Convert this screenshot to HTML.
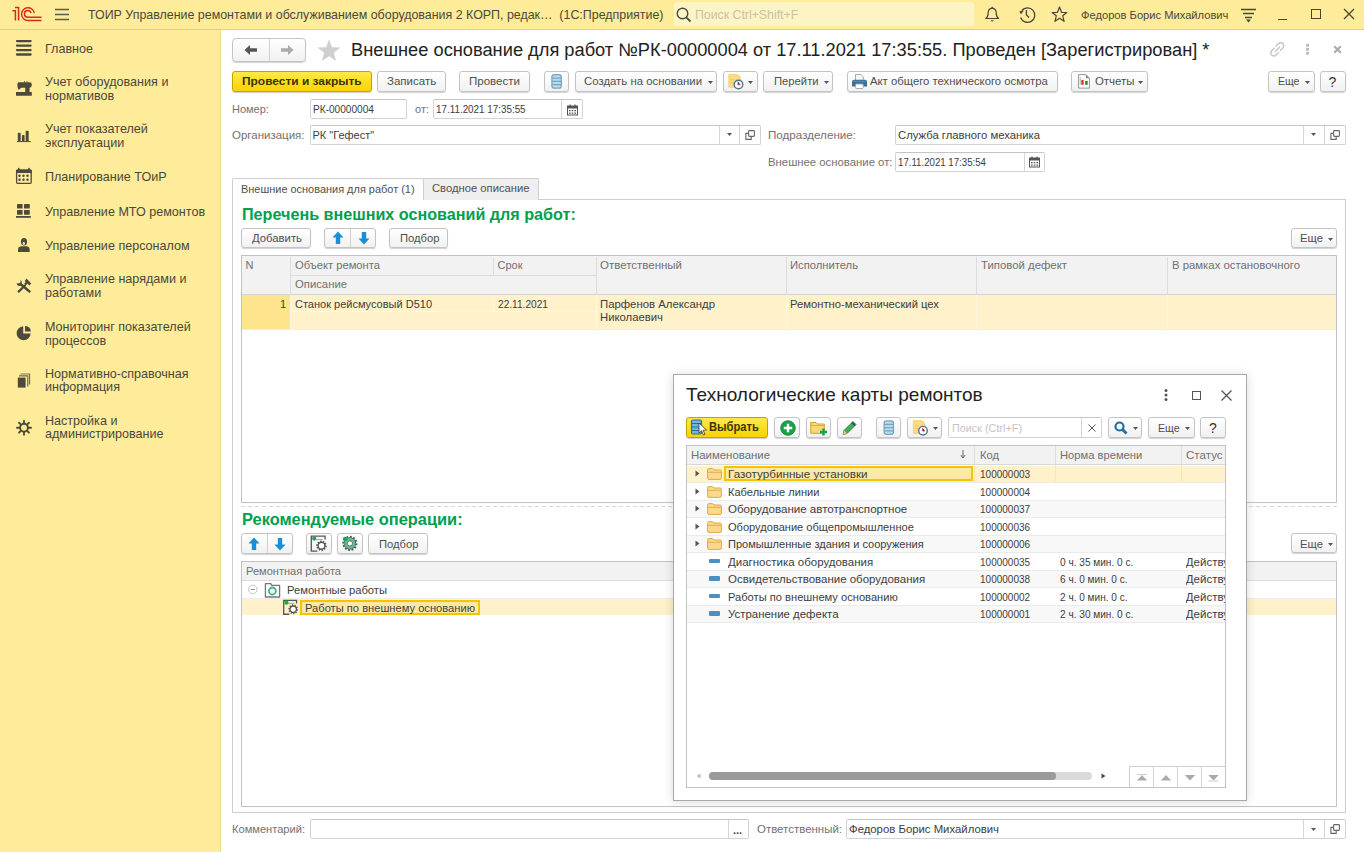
<!DOCTYPE html>
<html><head><meta charset="utf-8"><style>
html,body{margin:0;padding:0;width:1364px;height:852px;overflow:hidden;background:#fff;}
body{position:relative;font-family:"Liberation Sans", sans-serif;}
body>div{position:absolute;}
.tx{white-space:nowrap;font-family:"Liberation Sans", sans-serif;}
</style></head><body>
<div style="left:0px;top:0px;width:1364px;height:29px;background:#FEEC9B;"></div>
<div style="left:0px;top:29px;width:1364px;height:1px;background:#E0CF86;"></div>
<svg style="position:absolute;left:0px;top:0px" width="44" height="28" viewBox="0 0 44 28">
<path d="M12.4 10.8 H15.4 V20.5" stroke="#D52B1B" stroke-width="1.5" fill="none"/>
<path d="M15 7.6 H18.6 V20.5" stroke="#D52B1B" stroke-width="1.5" fill="none"/>
<path d="M34.3 13.1 A6.4 6.4 0 1 0 28 20.5 H41.5" stroke="#D52B1B" stroke-width="1.4" fill="none"/>
<path d="M31 13.1 A3.35 3.35 0 1 0 27.75 17.2 H41.5" stroke="#D52B1B" stroke-width="1.4" fill="none"/>
</svg>
<svg style="position:absolute;left:55px;top:8px" width="15" height="13" viewBox="0 0 15 13"><path d="M0 1.5H14M0 6.5H14M0 11.5H14" stroke="#5b5a4c" stroke-width="1.3"/></svg>
<div class="tx" style="transform:scaleX(0.9553);transform-origin:0 0;left:88px;top:6.70px;font-size:13px;line-height:16px;color:#4a4839;font-weight:400;">ТОИР Управление ремонтами и обслуживанием оборудования 2 КОРП, редак…&nbsp; (1С:Предприятие)</div>
<div style="left:674px;top:2px;width:300px;height:24px;background:#FDF4C6;border-radius:3px;"></div>
<svg style="position:absolute;left:676px;top:7px" width="16" height="16" viewBox="0 0 16 16"><circle cx="6.5" cy="6.5" r="5.3" stroke="#4a4a40" stroke-width="1.4" fill="none"/><path d="M10.3 10.3L14.5 14.5" stroke="#4a4a40" stroke-width="1.8"/></svg>
<div class="tx" style="transform:scaleX(0.9846);transform-origin:0 0;left:695px;top:7.17px;font-size:12.5px;line-height:16px;color:#c9c2a2;font-weight:400;">Поиск Ctrl+Shift+F</div>
<svg style="position:absolute;left:980px;top:4px" width="24" height="20" viewBox="0 0 24 20"><path d="M5.8 14.5 Q8.2 12.8 8.2 8.5 Q8.4 4.8 12.2 4.2 Q16 4.8 16.2 8.5 Q16.2 12.8 18.6 14.5 Z" stroke="#4a4536" stroke-width="1.2" fill="none" stroke-linejoin="round"/><path d="M10.5 16.2 Q12.2 18.6 13.9 16.2Z" fill="#4a4536"/><path d="M12.2 2.8V4.2" stroke="#4a4536" stroke-width="1.3"/></svg>
<svg style="position:absolute;left:1016px;top:4px" width="22" height="20" viewBox="0 0 22 20"><path d="M5.8 6.5 A7.3 7.3 0 1 1 4.6 13.5" stroke="#4a4536" stroke-width="1.3" fill="none"/><path d="M3.2 7.6 L7.8 6.6 L5 10.2Z" fill="#4a4536"/><path d="M10.4 6V11L13.2 13.6" stroke="#4a4536" stroke-width="1.3" fill="none"/></svg>
<svg style="position:absolute;left:1050px;top:4px" width="20" height="20" viewBox="0 0 20 20"><path d="M9.5 3 L11.5 8.3 L16.8 8.5 L12.7 11.8 L14.1 17.3 L9.5 14.2 L4.9 17.3 L6.3 11.8 L2.2 8.5 L7.5 8.3 Z" stroke="#4a4536" stroke-width="1.2" fill="none" stroke-linejoin="round"/></svg>
<div class="tx" style="transform:scaleX(0.9697);transform-origin:0 0;left:1080.6px;top:7.52px;font-size:11.5px;line-height:14px;color:#4a4839;font-weight:400;">Федоров Борис Михайлович</div>
<svg style="position:absolute;left:1241px;top:8px" width="16" height="15" viewBox="0 0 16 15"><path d="M0 1.5H15M2 5.5H13M4 9.5H11" stroke="#4a4536" stroke-width="1.3"/><path d="M5 11.5H10L7.5 14.5Z" fill="#4a4536"/></svg>
<div style="left:1278px;top:19px;width:9px;height:1px;background:#4a4536;"></div>
<div style="left:1311px;top:9px;width:10px;height:10px;border:1.3px solid #4a4536;box-sizing:border-box;"></div>
<svg style="position:absolute;left:1343px;top:8px" width="12" height="12" viewBox="0 0 12 12"><path d="M1 1L11 11M11 1L1 11" stroke="#4a4536" stroke-width="1.3"/></svg>
<div style="left:0px;top:30px;width:220px;height:822px;background:#FEEC9B;"></div>
<div style="left:220px;top:30px;width:1px;height:822px;background:#EADA92;"></div>
<div class="tx" style="left:45.3px;top:40.50px;font-size:13px;line-height:16px;color:#4a4839;font-weight:400;transform:scaleX(0.967);transform-origin:0 0;">Главное</div>
<div class="tx" style="left:45.3px;top:73.80px;font-size:13px;line-height:16px;color:#4a4839;font-weight:400;transform:scaleX(0.967);transform-origin:0 0;">Учет оборудования и</div>
<div class="tx" style="left:45.3px;top:88.30px;font-size:13px;line-height:16px;color:#4a4839;font-weight:400;transform:scaleX(0.967);transform-origin:0 0;">нормативов</div>
<div class="tx" style="left:45.3px;top:121.00px;font-size:13px;line-height:16px;color:#4a4839;font-weight:400;transform:scaleX(0.967);transform-origin:0 0;">Учет показателей</div>
<div class="tx" style="left:45.3px;top:135.30px;font-size:13px;line-height:16px;color:#4a4839;font-weight:400;transform:scaleX(0.967);transform-origin:0 0;">эксплуатации</div>
<div class="tx" style="left:45.3px;top:168.50px;font-size:13px;line-height:16px;color:#4a4839;font-weight:400;transform:scaleX(0.967);transform-origin:0 0;">Планирование ТОиР</div>
<div class="tx" style="left:45.3px;top:203.50px;font-size:13px;line-height:16px;color:#4a4839;font-weight:400;transform:scaleX(0.967);transform-origin:0 0;">Управление МТО ремонтов</div>
<div class="tx" style="left:45.3px;top:237.50px;font-size:13px;line-height:16px;color:#4a4839;font-weight:400;transform:scaleX(0.967);transform-origin:0 0;">Управление персоналом</div>
<div class="tx" style="left:45.3px;top:270.80px;font-size:13px;line-height:16px;color:#4a4839;font-weight:400;transform:scaleX(0.967);transform-origin:0 0;">Управление нарядами и</div>
<div class="tx" style="left:45.3px;top:285.10px;font-size:13px;line-height:16px;color:#4a4839;font-weight:400;transform:scaleX(0.967);transform-origin:0 0;">работами</div>
<div class="tx" style="left:45.3px;top:318.90px;font-size:13px;line-height:16px;color:#4a4839;font-weight:400;transform:scaleX(0.967);transform-origin:0 0;">Мониторинг показателей</div>
<div class="tx" style="left:45.3px;top:332.50px;font-size:13px;line-height:16px;color:#4a4839;font-weight:400;transform:scaleX(0.967);transform-origin:0 0;">процессов</div>
<div class="tx" style="left:45.3px;top:365.70px;font-size:13px;line-height:16px;color:#4a4839;font-weight:400;transform:scaleX(0.967);transform-origin:0 0;">Нормативно-справочная</div>
<div class="tx" style="left:45.3px;top:379.30px;font-size:13px;line-height:16px;color:#4a4839;font-weight:400;transform:scaleX(0.967);transform-origin:0 0;">информация</div>
<div class="tx" style="left:45.3px;top:412.50px;font-size:13px;line-height:16px;color:#4a4839;font-weight:400;transform:scaleX(0.967);transform-origin:0 0;">Настройка и</div>
<div class="tx" style="left:45.3px;top:426.10px;font-size:13px;line-height:16px;color:#4a4839;font-weight:400;transform:scaleX(0.967);transform-origin:0 0;">администрирование</div>
<svg style="position:absolute;left:0px;top:30px" width="40" height="420" viewBox="0 30 40 420">
<path d="M17 41.1H30.6M17 45.6H30.6M17 50.1H30.6M17 54.5H30.6" stroke="#4d4a3c" stroke-width="2.3" stroke-linecap="round"/>
<path d="M18.5 82.2 H29.8 Q31.8 82.2 31.8 84.5 Q31.8 87.5 29.6 87.8 V92 H31.8 V95.7 H16 V92 H25.2 V87.8 H21.5 Q19.8 88.5 18.8 90 Q17.4 88 17.4 85.5 Q17.4 82.2 18.5 82.2Z" fill="#4d4a3c"/>
<path d="M24.5 81V82.5M27 81V82.5" stroke="#4d4a3c" stroke-width="0.8"/>
<rect x="17.8" y="132.8" width="2.9" height="8.6" rx="0.8" fill="#4d4a3c"/>
<rect x="21.9" y="135" width="2.7" height="6.4" rx="0.8" fill="#4d4a3c"/>
<rect x="25.7" y="130.8" width="3" height="10.6" rx="0.8" fill="#4d4a3c"/>
<path d="M17 141.6H30.8" stroke="#4d4a3c" stroke-width="1"/>
<rect x="16.6" y="170" width="14.6" height="13.3" rx="1" fill="none" stroke="#4d4a3c" stroke-width="1.3"/>
<rect x="16.2" y="170" width="15.4" height="3" fill="#4d4a3c"/>
<path d="M18.8 168.5V171M29 168.5V171" stroke="#4d4a3c" stroke-width="1.6" stroke-linecap="round"/>
<g fill="#4d4a3c"><circle cx="19.5" cy="175.8" r="1.2"/><circle cx="23.5" cy="175.8" r="1.2"/><circle cx="27.5" cy="175.8" r="1.2"/><circle cx="19.5" cy="179.8" r="1.2"/><circle cx="23.5" cy="179.8" r="1.2"/><circle cx="27.5" cy="179.8" r="1.2"/></g>
<rect x="17" y="203.9" width="5.6" height="4.7" rx="0.6" fill="#4d4a3c"/>
<rect x="24" y="203.9" width="5.8" height="4.7" rx="0.6" fill="#4d4a3c"/>
<rect x="17" y="210" width="5.6" height="4.7" rx="0.6" fill="#4d4a3c"/>
<rect x="24" y="210" width="5.8" height="4.7" rx="0.6" fill="#4d4a3c"/>
<rect x="16" y="216" width="14.8" height="1.8" fill="#4d4a3c"/>
<ellipse cx="24" cy="241.8" rx="3.1" ry="3.8" fill="#4d4a3c"/>
<ellipse cx="23.8" cy="243.4" rx="1.2" ry="1.6" fill="#e9dba0"/>
<path d="M18 252 V249.5 Q18 246.3 22 246.2 H26 Q29.7 246.3 29.7 249.5 V252Z" fill="#4d4a3c"/>
<path d="M29.5 291.5 L20.5 284" stroke="#4d4a3c" stroke-width="2.4" stroke-linecap="round"/>
<path d="M16.4 283.6 Q17.5 287 21 285.5 Q22.8 282.5 20.4 279.6 L20.6 282.2 L19.2 283.2 Z" fill="#4d4a3c"/>
<path d="M18.6 291.6 L25 285.5" stroke="#4d4a3c" stroke-width="2.2" stroke-linecap="round"/>
<path d="M24.8 281 L26.5 278.5 L31.2 283.5 L29.5 285.5 L27.6 283.8 L25.6 285.2 L24.2 283.8 L25.6 282.3Z" fill="#4d4a3c"/>
<path d="M23.2 326.2 A7 7 0 1 0 30.6 333.4 H23.2 Z" fill="#4d4a3c"/>
<path d="M25 326 A5.4 5.4 0 0 1 30.8 331.6 H25 Z" fill="#4d4a3c"/>
<path d="M20.5 374 H29.6 V384.5" stroke="#4d4a3c" stroke-width="1.2" fill="none" opacity="0.75"/>
<path d="M19 375.8 H27.8 V386.6" stroke="#4d4a3c" stroke-width="1.2" fill="none" opacity="0.8"/>
<rect x="17.8" y="377.6" width="7.8" height="10" fill="#4d4a3c"/>
<g transform="translate(24 427.7)">
<circle r="3.9" fill="none" stroke="#4d4a3c" stroke-width="1.9"/>
<path d="M0 -7V-4.5M0 7V4.5M-7 0H-4.5M7 0H4.5M-4.95 -4.95L-3.3 -3.3M4.95 4.95L3.3 3.3M4.95 -4.95L3.3 -3.3M-4.95 4.95L-3.3 3.3" stroke="#4d4a3c" stroke-width="1.9" stroke-linecap="round"/>
</g>
</svg>
<div style="left:221px;top:30px;width:1143px;height:822px;background:#fff;"></div>
<div style="left:232px;top:38px;width:74px;height:24px;border:1px solid #c4c4c4;border-radius:3px;background:linear-gradient(#ffffff,#f1f1f1);box-shadow:0 1px 1px rgba(0,0,0,0.18);box-sizing:border-box;border-radius:4px;"></div>
<div style="left:269px;top:39px;width:1px;height:22px;background:#d0d0d0;"></div>
<svg style="position:absolute;left:244px;top:44px" width="14" height="12" viewBox="0 0 14 12"><path d="M0.5 6 L6 1 V4.3 H13 V7.7 H6 V11 Z" fill="#555"/></svg>
<svg style="position:absolute;left:280px;top:44px" width="14" height="12" viewBox="0 0 14 12"><path d="M13.5 6 L8 1 V4.3 H1 V7.7 H8 V11 Z" fill="#aaa"/></svg>
<svg style="position:absolute;left:317px;top:39px" width="24" height="23" viewBox="0 0 24 23"><path d="M12 0.5 L15 8.3 L23.5 8.6 L16.8 13.8 L19.2 22 L12 17.2 L4.8 22 L7.2 13.8 L0.5 8.6 L9 8.3 Z" fill="#cfcfcf"/></svg>
<div class="tx" style="transform:scaleX(1.0138);transform-origin:0 0;left:351px;top:38.86px;font-size:18px;line-height:22px;color:#222;font-weight:400;">Внешнее основание для работ №РК-00000004 от 17.11.2021 17:35:55. Проведен [Зарегистрирован] *</div>
<svg style="position:absolute;left:1268px;top:40px" width="19" height="19" viewBox="0 0 19 19"><path d="M7.6 6.4 L10.4 3.6 Q12.6 1.6 14.8 3.6 Q16.8 5.8 14.8 8 L12 10.8 M11 12.2 L8.2 15 Q6 17 3.8 15 Q1.8 12.8 3.8 10.6 L6.6 7.8 M6.8 12 L12 6.8" stroke="#c8c8c8" stroke-width="1.5" fill="none"/></svg>
<svg style="position:absolute;left:1305px;top:42px" width="5" height="15" viewBox="0 0 5 15"><rect x="1" y="1.7" width="3" height="3" rx="0.8" fill="#bbb"/><rect x="1" y="5.7" width="3" height="3" rx="0.8" fill="#bbb"/><rect x="1" y="9.8" width="3" height="3" rx="0.8" fill="#bbb"/></svg>
<svg style="position:absolute;left:1333px;top:45px" width="9" height="9" viewBox="0 0 9 9"><path d="M1.2 1.2L7.8 7.8M7.8 1.2L1.2 7.8" stroke="#aaa" stroke-width="2"/></svg>
<div style="left:232px;top:71px;width:140px;height:21px;border:1px solid #c2a400;border-radius:3px;background:linear-gradient(#ffe94a,#f9d400);box-shadow:0 1px 1px rgba(0,0,0,0.2);box-sizing:border-box;"></div>
<div class="tx" style="transform:scaleX(1.0372);transform-origin:0 0;left:242.3px;top:74.22px;font-size:11.5px;line-height:14px;color:#3a3500;font-weight:700;">Провести и закрыть</div>
<div style="left:377px;top:71px;width:69px;height:21px;border:1px solid #c4c4c4;border-radius:3px;background:linear-gradient(#ffffff,#f1f1f1);box-shadow:0 1px 1px rgba(0,0,0,0.18);box-sizing:border-box;"></div>
<div class="tx" style="transform:scaleX(1.0009);transform-origin:0 0;left:387px;top:74.02px;font-size:11.5px;line-height:14px;color:#4f4f4f;font-weight:400;">Записать</div>
<div style="left:459px;top:71px;width:71px;height:21px;border:1px solid #c4c4c4;border-radius:3px;background:linear-gradient(#ffffff,#f1f1f1);box-shadow:0 1px 1px rgba(0,0,0,0.18);box-sizing:border-box;"></div>
<div class="tx" style="transform:scaleX(1.0025);transform-origin:0 0;left:469px;top:74.02px;font-size:11.5px;line-height:14px;color:#4f4f4f;font-weight:400;">Провести</div>
<div style="left:544px;top:71px;width:25px;height:21px;border:1px solid #c4c4c4;border-radius:3px;background:linear-gradient(#ffffff,#f1f1f1);box-shadow:0 1px 1px rgba(0,0,0,0.18);box-sizing:border-box;"></div>
<svg style="position:absolute;left:550px;top:73px" width="13" height="17" viewBox="550 73 13 17"><rect x="551.9" y="74.69999999999999" width="9.4" height="13.4" rx="2.2" fill="#b4dcf1" stroke="#7ba3bb" stroke-width="1.2"/><path d="M551.9 78.1H561.3M551.9 81.39999999999999H561.3M551.9 84.69999999999999H561.3" stroke="#7ba3bb" stroke-width="1.3"/></svg>
<div style="left:575px;top:71px;width:142px;height:21px;border:1px solid #c4c4c4;border-radius:3px;background:linear-gradient(#ffffff,#f1f1f1);box-shadow:0 1px 1px rgba(0,0,0,0.18);box-sizing:border-box;"></div>
<div class="tx" style="transform:scaleX(0.9890);transform-origin:0 0;left:584.4px;top:74.02px;font-size:11.5px;line-height:14px;color:#4f4f4f;font-weight:400;">Создать на основании</div>
<svg style="position:absolute;left:707.5px;top:81.0px" width="5" height="3" viewBox="0 0 5 3"><path d="M0 0H5L2.5 3Z" fill="#555"/></svg>
<div style="left:723px;top:71px;width:35px;height:21px;border:1px solid #c4c4c4;border-radius:3px;background:linear-gradient(#ffffff,#f1f1f1);box-shadow:0 1px 1px rgba(0,0,0,0.18);box-sizing:border-box;"></div>
<svg style="position:absolute;left:727px;top:72px" width="19" height="19" viewBox="727 72 19 19"><path d="M728.8 74.39999999999999H736.3Q740.4 75.3 740.5999999999999 78.8V87.2H728.8Z" fill="#fbdc80" stroke="#f1cf6a" stroke-width="0.8"/><path d="M730.8 79.8H733.8M730.8 82.3H733.8" stroke="#e8c060" stroke-width="0.8"/><circle cx="738.5" cy="84.5" r="4.3" fill="#fff" stroke="#4f7396" stroke-width="1.4"/><path d="M738.0 81.8V84.8H740.4" stroke="#cc5566" stroke-width="1"/></svg>
<svg style="position:absolute;left:748.1px;top:81.0px" width="5" height="3" viewBox="0 0 5 3"><path d="M0 0H5L2.5 3Z" fill="#555"/></svg>
<div style="left:763px;top:71px;width:70px;height:21px;border:1px solid #c4c4c4;border-radius:3px;background:linear-gradient(#ffffff,#f1f1f1);box-shadow:0 1px 1px rgba(0,0,0,0.18);box-sizing:border-box;"></div>
<div class="tx" style="transform:scaleX(0.9785);transform-origin:0 0;left:773.8px;top:74.02px;font-size:11.5px;line-height:14px;color:#4f4f4f;font-weight:400;">Перейти</div>
<svg style="position:absolute;left:823.5px;top:81.0px" width="5" height="3" viewBox="0 0 5 3"><path d="M0 0H5L2.5 3Z" fill="#555"/></svg>
<div style="left:847px;top:71px;width:211px;height:21px;border:1px solid #c4c4c4;border-radius:3px;background:linear-gradient(#ffffff,#f1f1f1);box-shadow:0 1px 1px rgba(0,0,0,0.18);box-sizing:border-box;"></div>
<svg style="position:absolute;left:850px;top:72px" width="20" height="18" viewBox="850 72 20 18"><path d="M855.5 74.5H861L863.3 76.8V80.5H855.5Z" fill="#f4f6f8" stroke="#9aa4ad" stroke-width="0.9"/><path d="M852 81.8Q852 79.8 854 79.8H865Q867 79.8 867 81.8V86.6H852Z" fill="#3b6d96"/><path d="M853 81.3H866" stroke="#6a9cc0" stroke-width="0.7"/><rect x="855.6" y="84" width="7.6" height="4.5" rx="0.8" fill="#fff" stroke="#9aa4ad" stroke-width="0.9"/></svg>
<div class="tx" style="transform:scaleX(0.9833);transform-origin:0 0;left:870.4px;top:74.02px;font-size:11.5px;line-height:14px;color:#4f4f4f;font-weight:400;">Акт общего технического осмотра</div>
<div style="left:1071px;top:71px;width:77px;height:21px;border:1px solid #c4c4c4;border-radius:3px;background:linear-gradient(#ffffff,#f1f1f1);box-shadow:0 1px 1px rgba(0,0,0,0.18);box-sizing:border-box;"></div>
<svg style="position:absolute;left:1076px;top:72px" width="16" height="18" viewBox="1076 72 16 18"><path d="M1078.6 74.6H1085.8L1089.4 78.2V88.1H1078.6Z" fill="#fff" stroke="#8a96a0" stroke-width="1"/><path d="M1085.8 74.6V78.2H1089.4Z" fill="#7d8a94"/><path d="M1080.3 77.2V84.8" stroke="#aaa" stroke-width="0.8"/><rect x="1081.3" y="79.9" width="2.4" height="4.9" fill="#dc3b1e"/><rect x="1085.2" y="81" width="2.5" height="3.8" fill="#1c8a2a"/></svg>
<div class="tx" style="transform:scaleX(0.9908);transform-origin:0 0;left:1094.6px;top:74.02px;font-size:11.5px;line-height:14px;color:#4f4f4f;font-weight:400;">Отчеты</div>
<svg style="position:absolute;left:1138.0px;top:81.0px" width="5" height="3" viewBox="0 0 5 3"><path d="M0 0H5L2.5 3Z" fill="#555"/></svg>
<div style="left:1268px;top:71px;width:47px;height:21px;border:1px solid #c4c4c4;border-radius:3px;background:linear-gradient(#ffffff,#f1f1f1);box-shadow:0 1px 1px rgba(0,0,0,0.18);box-sizing:border-box;"></div>
<div class="tx" style="transform:scaleX(0.9186);transform-origin:0 0;left:1278.2px;top:74.02px;font-size:11.5px;line-height:14px;color:#4f4f4f;font-weight:400;">Еще</div>
<svg style="position:absolute;left:1304.5px;top:81.0px" width="5" height="3" viewBox="0 0 5 3"><path d="M0 0H5L2.5 3Z" fill="#555"/></svg>
<div style="left:1320px;top:71px;width:26px;height:21px;border:1px solid #c4c4c4;border-radius:3px;background:linear-gradient(#ffffff,#f1f1f1);box-shadow:0 1px 1px rgba(0,0,0,0.18);box-sizing:border-box;"></div>
<div class="tx" style="left:1328.5px;top:72.65px;font-size:14px;line-height:18px;color:#333;font-weight:400;">?</div>
<div class="tx" style="transform:scaleX(0.9994);transform-origin:0 0;left:231.9px;top:101.79px;font-size:11px;line-height:14px;color:#727272;font-weight:400;">Номер:</div>
<div style="left:310px;top:99px;width:97px;height:20px;border:1px solid #d2d2d2;border-top-color:#c4c4c4;border-radius:2px;background:#fff;box-sizing:border-box;"></div>
<div class="tx" style="transform:scaleX(0.9192);transform-origin:0 0;left:312.5px;top:101.79px;font-size:11px;line-height:14px;color:#3d3d3d;font-weight:400;">РК-00000004</div>
<div class="tx" style="left:415px;top:101.79px;font-size:11px;line-height:14px;color:#727272;font-weight:400;">от:</div>
<div style="left:433px;top:99px;width:150px;height:20px;border:1px solid #d2d2d2;border-top-color:#c4c4c4;border-radius:2px;background:#fff;box-sizing:border-box;"></div>
<div class="tx" style="transform:scaleX(0.8949);transform-origin:0 0;left:436.2px;top:101.79px;font-size:11px;line-height:14px;color:#3d3d3d;font-weight:400;">17.11.2021 17:35:55</div>
<div style="left:561px;top:100px;width:1px;height:18px;background:#d6d6d6;"></div>
<svg style="position:absolute;left:566.5px;top:103.5px" width="11" height="12" viewBox="0 0 11 12"><rect x="0.5" y="2" width="10" height="9" fill="none" stroke="#555" stroke-width="1"/><rect x="0.5" y="2" width="10" height="2.5" fill="#555"/><path d="M3 0.5V3M8 0.5V3" stroke="#555" stroke-width="1.2"/><path d="M2 6h1.6v1.3H2zM4.7 6h1.6v1.3H4.7zM7.4 6h1.6v1.3H7.4zM2 8.4h1.6v1.3H2zM4.7 8.4h1.6v1.3H4.7zM7.4 8.4h1.6v1.3H7.4z" fill="#555"/></svg>
<div class="tx" style="transform:scaleX(1.0446);transform-origin:0 0;left:231.9px;top:127.99px;font-size:11px;line-height:14px;color:#727272;font-weight:400;">Организация:</div>
<div style="left:310px;top:125px;width:451px;height:20px;border:1px solid #d2d2d2;border-top-color:#c4c4c4;border-radius:2px;background:#fff;box-sizing:border-box;"></div>
<div class="tx" style="left:312.5px;top:127.99px;font-size:11px;line-height:14px;color:#3d3d3d;font-weight:400;">РК "Гефест"</div>
<div style="left:719px;top:126px;width:1px;height:18px;background:#d6d6d6;"></div>
<div style="left:739px;top:126px;width:1px;height:18px;background:#d6d6d6;"></div>
<svg style="position:absolute;left:726.5px;top:133.1px" width="5" height="3" viewBox="0 0 5 3"><path d="M0 0H5L2.5 3Z" fill="#555"/></svg>
<svg style="position:absolute;left:745px;top:130px" width="11" height="11" viewBox="0 0 11 11"><rect x="3.6" y="0.6" width="5.8" height="5.8" rx="0.8" fill="#fff" stroke="#666" stroke-width="1.1"/><path d="M3.2 3.4H0.9V9.4H6.2V7" stroke="#666" stroke-width="1.1" fill="none"/></svg>
<div class="tx" style="transform:scaleX(1.0575);transform-origin:0 0;left:768.4px;top:128.19px;font-size:11px;line-height:14px;color:#727272;font-weight:400;">Подразделение:</div>
<div style="left:895px;top:125px;width:451px;height:20px;border:1px solid #d2d2d2;border-top-color:#c4c4c4;border-radius:2px;background:#fff;box-sizing:border-box;"></div>
<div class="tx" style="transform:scaleX(1.0267);transform-origin:0 0;left:898px;top:128.19px;font-size:11px;line-height:14px;color:#3d3d3d;font-weight:400;">Служба главного механика</div>
<div style="left:1303px;top:126px;width:1px;height:18px;background:#d6d6d6;"></div>
<div style="left:1324px;top:126px;width:1px;height:18px;background:#d6d6d6;"></div>
<svg style="position:absolute;left:1311.0px;top:133.1px" width="5" height="3" viewBox="0 0 5 3"><path d="M0 0H5L2.5 3Z" fill="#555"/></svg>
<svg style="position:absolute;left:1330px;top:130px" width="11" height="11" viewBox="0 0 11 11"><rect x="3.6" y="0.6" width="5.8" height="5.8" rx="0.8" fill="#fff" stroke="#666" stroke-width="1.1"/><path d="M3.2 3.4H0.9V9.4H6.2V7" stroke="#666" stroke-width="1.1" fill="none"/></svg>
<div class="tx" style="transform:scaleX(1.0312);transform-origin:0 0;left:768.4px;top:154.59px;font-size:11px;line-height:14px;color:#727272;font-weight:400;">Внешнее основание от:</div>
<div style="left:895px;top:152px;width:150px;height:20px;border:1px solid #d2d2d2;border-top-color:#c4c4c4;border-radius:2px;background:#fff;box-sizing:border-box;"></div>
<div class="tx" style="transform:scaleX(0.8789);transform-origin:0 0;left:898px;top:154.59px;font-size:11px;line-height:14px;color:#3d3d3d;font-weight:400;">17.11.2021 17:35:54</div>
<div style="left:1024px;top:153px;width:1px;height:18px;background:#d6d6d6;"></div>
<svg style="position:absolute;left:1029px;top:156px" width="11" height="12" viewBox="0 0 11 12"><rect x="0.5" y="2" width="10" height="9" fill="none" stroke="#555" stroke-width="1"/><rect x="0.5" y="2" width="10" height="2.5" fill="#555"/><path d="M3 0.5V3M8 0.5V3" stroke="#555" stroke-width="1.2"/><path d="M2 6h1.6v1.3H2zM4.7 6h1.6v1.3H4.7zM7.4 6h1.6v1.3H7.4zM2 8.4h1.6v1.3H2zM4.7 8.4h1.6v1.3H4.7zM7.4 8.4h1.6v1.3H7.4z" fill="#555"/></svg>
<div style="left:232px;top:199px;width:1114px;height:614px;border:1px solid #cfcfcf;box-sizing:border-box;background:#fff;"></div>
<div style="left:423px;top:178px;width:116px;height:22px;background:#efefef;border:1px solid #cfcfcf;border-bottom:none;box-sizing:border-box;border-radius:2px 2px 0 0;"></div>
<div style="left:232px;top:178px;width:192px;height:22px;background:#fff;border:1px solid #cfcfcf;border-bottom:none;box-sizing:border-box;border-radius:2px 2px 0 0;"></div>
<div class="tx" style="transform:scaleX(0.9952);transform-origin:0 0;left:241.4px;top:181.69px;font-size:11px;line-height:14px;color:#4f4f4f;font-weight:400;">Внешние основания для работ (1)</div>
<div class="tx" style="transform:scaleX(1.0209);transform-origin:0 0;left:431.8px;top:181.49px;font-size:11px;line-height:14px;color:#4f4f4f;font-weight:400;">Сводное описание</div>
<div class="tx" style="transform:scaleX(1.0091);transform-origin:0 0;left:241.8px;top:204.96px;font-size:16px;line-height:20px;color:#00A04E;font-weight:700;">Перечень внешних оснований для работ:</div>
<div style="left:241px;top:228px;width:70px;height:20px;border:1px solid #c4c4c4;border-radius:3px;background:linear-gradient(#ffffff,#f1f1f1);box-shadow:0 1px 1px rgba(0,0,0,0.18);box-sizing:border-box;"></div>
<div class="tx" style="transform:scaleX(1.0283);transform-origin:0 0;left:251.5px;top:231.19px;font-size:11px;line-height:14px;color:#4f4f4f;font-weight:400;">Добавить</div>
<div style="left:324px;top:228px;width:52px;height:20px;border:1px solid #c4c4c4;border-radius:3px;background:linear-gradient(#ffffff,#f1f1f1);box-shadow:0 1px 1px rgba(0,0,0,0.18);box-sizing:border-box;"></div>
<div style="left:350px;top:229px;width:1px;height:18px;background:#d0d0d0;"></div>
<svg style="position:absolute;left:331.5px;top:231px" width="12" height="14" viewBox="0 0 12 14"><path d="M6 0.5 L11.5 6.5 H8.2 V13 H3.8 V6.5 H0.5 Z" fill="#1a8fd6"/></svg>
<svg style="position:absolute;left:357.5px;top:231px" width="12" height="14" viewBox="0 0 12 14"><path d="M6 13.5 L11.5 7.5 H8.2 V1 H3.8 V7.5 H0.5 Z" fill="#1a8fd6"/></svg>
<div style="left:389px;top:228px;width:59px;height:20px;border:1px solid #c4c4c4;border-radius:3px;background:linear-gradient(#ffffff,#f1f1f1);box-shadow:0 1px 1px rgba(0,0,0,0.18);box-sizing:border-box;"></div>
<div class="tx" style="transform:scaleX(1.0194);transform-origin:0 0;left:399.5px;top:231.19px;font-size:11px;line-height:14px;color:#4f4f4f;font-weight:400;">Подбор</div>
<div style="left:1291px;top:228px;width:46px;height:20px;border:1px solid #c4c4c4;border-radius:3px;background:linear-gradient(#ffffff,#f1f1f1);box-shadow:0 1px 1px rgba(0,0,0,0.18);box-sizing:border-box;"></div>
<div class="tx" style="transform:scaleX(1.0272);transform-origin:0 0;left:1299.5px;top:231.19px;font-size:11px;line-height:14px;color:#4f4f4f;font-weight:400;">Еще</div>
<svg style="position:absolute;left:1327.5px;top:237.5px" width="5" height="3" viewBox="0 0 5 3"><path d="M0 0H5L2.5 3Z" fill="#555"/></svg>
<div style="left:241px;top:255px;width:1096px;height:248px;border:1px solid #c2c2c2;box-sizing:border-box;background:#fff;"></div>
<div style="left:242px;top:256px;width:1094px;height:39px;background:#f2f2f2;"></div>
<div style="left:242px;top:294px;width:1094px;height:1px;background:#d4d4d4;"></div>
<div style="left:290px;top:257px;width:1px;height:38px;background:#dcdcdc;"></div>
<div style="left:596px;top:257px;width:1px;height:38px;background:#dcdcdc;"></div>
<div style="left:786px;top:257px;width:1px;height:38px;background:#dcdcdc;"></div>
<div style="left:976px;top:257px;width:1px;height:38px;background:#dcdcdc;"></div>
<div style="left:1167px;top:257px;width:1px;height:38px;background:#dcdcdc;"></div>
<div style="left:493px;top:257px;width:1px;height:19px;background:#dcdcdc;"></div>
<div style="left:290px;top:275px;width:306px;height:1px;background:#dcdcdc;"></div>
<div class="tx" style="left:245.4px;top:258.19px;font-size:11px;line-height:14px;color:#707070;font-weight:400;">N</div>
<div class="tx" style="transform:scaleX(1.0174);transform-origin:0 0;left:295.4px;top:258.19px;font-size:11px;line-height:14px;color:#707070;font-weight:400;">Объект ремонта</div>
<div class="tx" style="left:497.5px;top:258.19px;font-size:11px;line-height:14px;color:#707070;font-weight:400;">Срок</div>
<div class="tx" style="transform:scaleX(1.0438);transform-origin:0 0;left:599.6px;top:258.19px;font-size:11px;line-height:14px;color:#707070;font-weight:400;">Ответственный</div>
<div class="tx" style="transform:scaleX(1.0194);transform-origin:0 0;left:790.2px;top:258.19px;font-size:11px;line-height:14px;color:#707070;font-weight:400;">Исполнитель</div>
<div class="tx" style="transform:scaleX(1.0340);transform-origin:0 0;left:981px;top:258.19px;font-size:11px;line-height:14px;color:#707070;font-weight:400;">Типовой дефект</div>
<div class="tx" style="transform:scaleX(1.0308);transform-origin:0 0;left:1172px;top:258.19px;font-size:11px;line-height:14px;color:#707070;font-weight:400;">В рамках остановочного</div>
<div class="tx" style="transform:scaleX(1.0272);transform-origin:0 0;left:295.4px;top:277.19px;font-size:11px;line-height:14px;color:#707070;font-weight:400;">Описание</div>
<div style="left:242px;top:295px;width:1094px;height:34px;background:#FFF1C9;"></div>
<div style="left:242px;top:295px;width:48px;height:34px;background:#FDE48D;"></div>
<div style="left:290px;top:295px;width:1px;height:34px;background:#fff8e0;"></div>
<div style="left:596px;top:295px;width:1px;height:34px;background:#fff8e0;"></div>
<div style="left:786px;top:295px;width:1px;height:34px;background:#fff8e0;"></div>
<div style="left:976px;top:295px;width:1px;height:34px;background:#fff8e0;"></div>
<div style="left:1167px;top:295px;width:1px;height:34px;background:#fff8e0;"></div>
<div style="left:493px;top:295px;width:1px;height:17px;background:#fff8e0;"></div>
<div style="left:290px;top:311px;width:306px;height:1px;background:#fff8e0;"></div>
<div style="left:242px;top:329px;width:1094px;height:1px;background:#ededed;"></div>
<div class="tx" style="left:280px;top:297.19px;font-size:11px;line-height:14px;color:#3d3d3d;font-weight:400;">1</div>
<div class="tx" style="transform:scaleX(1.0002);transform-origin:0 0;left:295.4px;top:297.19px;font-size:11px;line-height:14px;color:#3d3d3d;font-weight:400;">Станок рейсмусовый D510</div>
<div class="tx" style="transform:scaleX(0.9217);transform-origin:0 0;left:497.5px;top:297.19px;font-size:11px;line-height:14px;color:#3d3d3d;font-weight:400;">22.11.2021</div>
<div class="tx" style="transform:scaleX(1.0318);transform-origin:0 0;left:599.6px;top:297.19px;font-size:11px;line-height:14px;color:#3d3d3d;font-weight:400;">Парфенов Александр</div>
<div class="tx" style="transform:scaleX(1.0280);transform-origin:0 0;left:599.6px;top:310.19px;font-size:11px;line-height:14px;color:#3d3d3d;font-weight:400;">Николаевич</div>
<div class="tx" style="transform:scaleX(1.0216);transform-origin:0 0;left:790.2px;top:297.19px;font-size:11px;line-height:14px;color:#3d3d3d;font-weight:400;">Ремонтно-механический цех</div>
<div style="left:241px;top:506px;width:1096px;height:1px;background:repeating-linear-gradient(90deg,#d8d8d8 0 4px,transparent 4px 7px);"></div>
<div class="tx" style="transform:scaleX(1.0244);transform-origin:0 0;left:241.8px;top:510.16px;font-size:16px;line-height:20px;color:#00A04E;font-weight:700;">Рекомендуемые операции:</div>
<div style="left:241px;top:533px;width:52px;height:21px;border:1px solid #c4c4c4;border-radius:3px;background:linear-gradient(#ffffff,#f1f1f1);box-shadow:0 1px 1px rgba(0,0,0,0.18);box-sizing:border-box;"></div>
<div style="left:267px;top:534px;width:1px;height:19px;background:#d0d0d0;"></div>
<svg style="position:absolute;left:248px;top:536.5px" width="12" height="14" viewBox="0 0 12 14"><path d="M6 0.5 L11.5 6.5 H8.2 V13 H3.8 V6.5 H0.5 Z" fill="#1a8fd6"/></svg>
<svg style="position:absolute;left:273.5px;top:536.5px" width="12" height="14" viewBox="0 0 12 14"><path d="M6 13.5 L11.5 7.5 H8.2 V1 H3.8 V7.5 H0.5 Z" fill="#1a8fd6"/></svg>
<div style="left:306px;top:533px;width:26px;height:21px;border:1px solid #c4c4c4;border-radius:3px;background:linear-gradient(#ffffff,#f1f1f1);box-shadow:0 1px 1px rgba(0,0,0,0.18);box-sizing:border-box;"></div>
<svg style="position:absolute;left:308px;top:533px" width="22" height="21" viewBox="308 533 22 21"><path d="M325.1 539.5V536.1H311.3V551.1H317.3" stroke="#555" stroke-width="1.3" fill="none"/><path d="M315.90000000000003 539.5H322.6" stroke="#7fd4a0" stroke-width="1.3"/><circle cx="314.2" cy="538.6" r="2.1" fill="#14a85a"/><path d="M326.80 545.70 L326.54 547.34 L325.49 547.00 L324.90 548.17 L325.79 548.82 L324.62 549.99 L323.97 549.10 L322.80 549.69 L323.14 550.74 L321.50 551.00 L321.50 549.90 L320.20 549.69 L319.86 550.74 L318.38 549.99 L319.03 549.10 L318.10 548.17 L317.21 548.82 L316.46 547.34 L317.51 547.00 L317.30 545.70 L316.20 545.70 L316.46 544.06 L317.51 544.40 L318.10 543.23 L317.21 542.58 L318.38 541.41 L319.03 542.30 L320.20 541.71 L319.86 540.66 L321.50 540.40 L321.50 541.50 L322.80 541.71 L323.14 540.66 L324.62 541.41 L323.97 542.30 L324.90 543.23 L325.79 542.58 L326.54 544.06 L325.49 544.40 L325.70 545.70Z" fill="#555"/><circle cx="321.5" cy="545.7" r="2.7" fill="#fff"/></svg>
<div style="left:337px;top:533px;width:26px;height:21px;border:1px solid #c4c4c4;border-radius:3px;background:linear-gradient(#ffffff,#f1f1f1);box-shadow:0 1px 1px rgba(0,0,0,0.18);box-sizing:border-box;"></div>
<svg style="position:absolute;left:338px;top:533px" width="24" height="21" viewBox="338 533 24 21"><path d="M357.50 543.40 L357.24 545.37 L355.89 545.00 L355.27 546.50 L356.48 547.20 L355.27 548.77 L354.28 547.78 L353.00 548.77 L353.70 549.98 L351.87 550.74 L351.50 549.39 L349.90 549.60 L349.90 551.00 L347.93 550.74 L348.30 549.39 L346.80 548.77 L346.10 549.98 L344.53 548.77 L345.52 547.78 L344.53 546.50 L343.32 547.20 L342.56 545.37 L343.91 545.00 L343.70 543.40 L342.30 543.40 L342.56 541.43 L343.91 541.80 L344.53 540.30 L343.32 539.60 L344.53 538.03 L345.52 539.02 L346.80 538.03 L346.10 536.82 L347.93 536.06 L348.30 537.41 L349.90 537.20 L349.90 535.80 L351.87 536.06 L351.50 537.41 L353.00 538.03 L353.70 536.82 L355.27 538.03 L354.28 539.02 L355.27 540.30 L356.48 539.60 L357.24 541.43 L355.89 541.80 L356.10 543.40Z" fill="#555"/><circle cx="349.9" cy="543.4" r="5.6" fill="#5ebd8e"/><circle cx="349.9" cy="543.4" r="2.6" fill="#fff" stroke="#555" stroke-width="0.8"/><circle cx="345.1" cy="538.9" r="2.2" fill="#14a85a"/></svg>
<div style="left:368px;top:533px;width:60px;height:21px;border:1px solid #c4c4c4;border-radius:3px;background:linear-gradient(#ffffff,#f1f1f1);box-shadow:0 1px 1px rgba(0,0,0,0.18);box-sizing:border-box;"></div>
<div class="tx" style="transform:scaleX(1.0194);transform-origin:0 0;left:378.5px;top:536.69px;font-size:11px;line-height:14px;color:#4f4f4f;font-weight:400;">Подбор</div>
<div style="left:1291px;top:533px;width:46px;height:20px;border:1px solid #c4c4c4;border-radius:3px;background:linear-gradient(#ffffff,#f1f1f1);box-shadow:0 1px 1px rgba(0,0,0,0.18);box-sizing:border-box;"></div>
<div class="tx" style="transform:scaleX(1.0272);transform-origin:0 0;left:1299.5px;top:536.69px;font-size:11px;line-height:14px;color:#4f4f4f;font-weight:400;">Еще</div>
<svg style="position:absolute;left:1327.5px;top:543.0px" width="5" height="3" viewBox="0 0 5 3"><path d="M0 0H5L2.5 3Z" fill="#555"/></svg>
<div style="left:241px;top:561px;width:1096px;height:246px;border:1px solid #c2c2c2;box-sizing:border-box;background:#fff;"></div>
<div style="left:242px;top:562px;width:1094px;height:18px;background:#f2f2f2;"></div>
<div style="left:242px;top:580px;width:1094px;height:1px;background:#dcdcdc;"></div>
<div class="tx" style="transform:scaleX(1.0061);transform-origin:0 0;left:246px;top:564.19px;font-size:11px;line-height:14px;color:#707070;font-weight:400;">Ремонтная работа</div>
<div style="left:242px;top:598px;width:1094px;height:1px;background:#ececec;"></div>
<div style="left:242px;top:599px;width:1094px;height:16px;background:#FFF1C9;"></div>
<svg style="position:absolute;left:247px;top:584px" width="12" height="12" viewBox="247 584 12 12"><circle cx="252.8" cy="589.5" r="4.2" fill="none" stroke="#c4c4c4" stroke-width="1"/><path d="M250.6 589.5H255" stroke="#999" stroke-width="1"/></svg>
<svg style="position:absolute;left:263px;top:582px" width="19" height="17" viewBox="263 582 19 17"><path d="M265.4 597V583.7H270.8L271.8 585.4H279.6V597Z" fill="#fff" stroke="#777" stroke-width="1.3" stroke-linejoin="round"/><circle cx="272.4" cy="591" r="3.5" fill="#e6faf0" stroke="#4caf7f" stroke-width="1.8"/></svg>
<div class="tx" style="transform:scaleX(1.0175);transform-origin:0 0;left:286.5px;top:582.99px;font-size:11px;line-height:14px;color:#3d3d3d;font-weight:400;">Ремонтные работы</div>
<svg style="position:absolute;left:281px;top:598px" width="19" height="18" viewBox="281 598 19 18"><path d="M296.534 603.462V600.3H283.7V614.25H289.28" stroke="#555" stroke-width="1.3" fill="none"/><path d="M287.978 603.462H294.209" stroke="#7fd4a0" stroke-width="1.3"/><circle cx="286.397" cy="602.625" r="2.1" fill="#14a85a"/><path d="M298.11 609.23 L297.87 610.75 L296.90 610.44 L296.35 611.52 L297.17 612.13 L296.08 613.22 L295.48 612.39 L294.39 612.94 L294.71 613.92 L293.19 614.16 L293.19 613.13 L291.98 612.94 L291.66 613.92 L290.29 613.22 L290.89 612.39 L290.03 611.52 L289.20 612.13 L288.50 610.75 L289.47 610.44 L289.28 609.23 L288.26 609.23 L288.50 607.70 L289.47 608.02 L290.03 606.93 L289.20 606.33 L290.29 605.24 L290.89 606.07 L291.98 605.51 L291.66 604.54 L293.19 604.30 L293.19 605.32 L294.39 605.51 L294.71 604.54 L296.08 605.24 L295.48 606.07 L296.35 606.93 L297.17 606.33 L297.87 607.70 L296.90 608.02 L297.09 609.23Z" fill="#555"/><circle cx="293.186" cy="609.228" r="2.511" fill="#fff"/></svg>
<div style="left:300px;top:600px;width:180px;height:15px;border:2px solid #F3C500;box-sizing:border-box;background:#FDE9A2;"></div>
<div class="tx" style="transform:scaleX(1.0130);transform-origin:0 0;left:304.8px;top:600.59px;font-size:11px;line-height:14px;color:#3d3d3d;font-weight:400;">Работы по внешнему основанию</div>
<div class="tx" style="transform:scaleX(1.0091);transform-origin:0 0;left:231.9px;top:822.39px;font-size:11px;line-height:14px;color:#727272;font-weight:400;">Комментарий:</div>
<div style="left:310px;top:819px;width:439px;height:20px;border:1px solid #d2d2d2;border-top-color:#c4c4c4;border-radius:2px;background:#fff;box-sizing:border-box;"></div>
<div style="left:728px;top:820px;width:1px;height:18px;background:#d6d6d6;"></div>
<div class="tx" style="left:733px;top:823.19px;font-size:11px;line-height:14px;color:#3d3d3d;font-weight:700;">...</div>
<div class="tx" style="transform:scaleX(1.0413);transform-origin:0 0;left:756.6px;top:822.39px;font-size:11px;line-height:14px;color:#727272;font-weight:400;">Ответственный:</div>
<div style="left:846px;top:819px;width:500px;height:20px;border:1px solid #d2d2d2;border-top-color:#c4c4c4;border-radius:2px;background:#fff;box-sizing:border-box;"></div>
<div class="tx" style="transform:scaleX(1.0317);transform-origin:0 0;left:849px;top:822.39px;font-size:11px;line-height:14px;color:#3d3d3d;font-weight:400;">Федоров Борис Михайлович</div>
<div style="left:1303px;top:820px;width:1px;height:18px;background:#d6d6d6;"></div>
<div style="left:1324px;top:820px;width:1px;height:18px;background:#d6d6d6;"></div>
<svg style="position:absolute;left:1310.8px;top:827.7px" width="5" height="3" viewBox="0 0 5 3"><path d="M0 0H5L2.5 3Z" fill="#555"/></svg>
<svg style="position:absolute;left:1330px;top:824px" width="11" height="11" viewBox="0 0 11 11"><rect x="3.6" y="0.6" width="5.8" height="5.8" rx="0.8" fill="#fff" stroke="#666" stroke-width="1.1"/><path d="M3.2 3.4H0.9V9.4H6.2V7" stroke="#666" stroke-width="1.1" fill="none"/></svg>
<div style="left:673px;top:374px;width:574px;height:427px;background:#fff;border:1px solid #a8a8a8;box-sizing:border-box;box-shadow:0 1px 10px rgba(0,0,0,0.15);"></div>
<div class="tx" style="transform:scaleX(1.0008);transform-origin:0 0;left:686.3px;top:382.92px;font-size:19px;line-height:24px;color:#222;font-weight:400;">Технологические карты ремонтов</div>
<svg style="position:absolute;left:1163.5px;top:389px" width="4" height="12" viewBox="0 0 4 12"><circle cx="2" cy="1.6" r="1.5" fill="#555"/><circle cx="2" cy="6" r="1.5" fill="#555"/><circle cx="2" cy="10.4" r="1.5" fill="#555"/></svg>
<div style="left:1192px;top:391px;width:9px;height:9px;border:1.2px solid #555;box-sizing:border-box;"></div>
<svg style="position:absolute;left:1220.5px;top:389.5px" width="11" height="11" viewBox="0 0 11 11"><path d="M0.5 0.5L10.5 10.5M10.5 0.5L0.5 10.5" stroke="#555" stroke-width="1.3"/></svg>
<div style="left:686px;top:417px;width:82px;height:21px;border:1px solid #c2a400;border-radius:3px;background:linear-gradient(#ffe94a,#f9d400);box-shadow:0 1px 1px rgba(0,0,0,0.2);box-sizing:border-box;"></div>
<svg style="position:absolute;left:690px;top:419px" width="20" height="17" viewBox="0 0 20 17"><rect x="1.5" y="1" width="10" height="14" rx="1.5" fill="#6fb6e0" stroke="#2f6f96" stroke-width="1.2"/><path d="M1.5 4.5H11.5M1.5 8H11.5M1.5 11.5H11.5" stroke="#2f6f96" stroke-width="1"/><path d="M9 4 L9 14 L11.5 11.8 L13.5 16 L15 15.2 L13 11.2 L16.5 11 Z" fill="#fff" stroke="#333" stroke-width="0.8"/></svg>
<div class="tx" style="transform:scaleX(0.9292);transform-origin:0 0;left:709.2px;top:420.34px;font-size:12px;line-height:15px;color:#3d3500;font-weight:700;">Выбрать</div>
<div style="left:774px;top:417px;width:26px;height:21px;border:1px solid #c4c4c4;border-radius:3px;background:linear-gradient(#ffffff,#f1f1f1);box-shadow:0 1px 1px rgba(0,0,0,0.18);box-sizing:border-box;"></div>
<svg style="position:absolute;left:779.5px;top:419.5px" width="16" height="16" viewBox="0 0 16 16"><circle cx="8" cy="8" r="7.3" fill="#19a348" stroke="#0e7f36" stroke-width="0.8"/><path d="M8 3.8V12.2M3.8 8H12.2" stroke="#fff" stroke-width="2.4"/></svg>
<div style="left:806px;top:417px;width:25px;height:21px;border:1px solid #c4c4c4;border-radius:3px;background:linear-gradient(#ffffff,#f1f1f1);box-shadow:0 1px 1px rgba(0,0,0,0.18);box-sizing:border-box;"></div>
<svg style="position:absolute;left:810px;top:420px" width="18" height="16" viewBox="0 0 18 16"><path d="M0.7 2.5H6L7.5 4H14.3V13.3H0.7Z" fill="#f8d77a" stroke="#d4a23a" stroke-width="1"/><path d="M0.7 5.5H14.3" stroke="#d4a23a" stroke-width="0.8"/><path d="M13.5 8.5V15.5M10 12H17" stroke="#19a348" stroke-width="2.4"/></svg>
<div style="left:837px;top:417px;width:25px;height:21px;border:1px solid #c4c4c4;border-radius:3px;background:linear-gradient(#ffffff,#f1f1f1);box-shadow:0 1px 1px rgba(0,0,0,0.18);box-sizing:border-box;"></div>
<svg style="position:absolute;left:841px;top:420px" width="17" height="16" viewBox="0 0 17 16"><path d="M2 14.5 L3 10.5 L12 1.5 L15 4.5 L6 13.5 Z" fill="#3bb05c" stroke="#2b6a40" stroke-width="0.8"/><path d="M2 14.5 L3 10.5 L6 13.5 Z" fill="#e8c48a"/><path d="M11 2.5 L14 5.5" stroke="#444" stroke-width="1.6"/></svg>
<div style="left:876px;top:417px;width:25px;height:21px;border:1px solid #c4c4c4;border-radius:3px;background:linear-gradient(#ffffff,#f1f1f1);box-shadow:0 1px 1px rgba(0,0,0,0.18);box-sizing:border-box;"></div>
<svg style="position:absolute;left:882px;top:419px" width="13" height="17" viewBox="882 419 13 17"><rect x="884.1" y="420.90000000000003" width="9.4" height="13.4" rx="2.2" fill="#b4dcf1" stroke="#7ba3bb" stroke-width="1.2"/><path d="M884.1 424.3H893.5M884.1 427.6H893.5M884.1 430.90000000000003H893.5" stroke="#7ba3bb" stroke-width="1.3"/></svg>
<div style="left:907px;top:417px;width:35px;height:21px;border:1px solid #c4c4c4;border-radius:3px;background:linear-gradient(#ffffff,#f1f1f1);box-shadow:0 1px 1px rgba(0,0,0,0.18);box-sizing:border-box;"></div>
<svg style="position:absolute;left:911px;top:418px" width="19" height="19" viewBox="911 418 19 19"><path d="M913.3 420.6H920.8Q924.9 421.5 925.0999999999999 425V433.4H913.3Z" fill="#fbdc80" stroke="#f1cf6a" stroke-width="0.8"/><path d="M915.3 426H918.3M915.3 428.5H918.3" stroke="#e8c060" stroke-width="0.8"/><circle cx="923.0" cy="430.7" r="4.3" fill="#fff" stroke="#4f7396" stroke-width="1.4"/><path d="M922.5 428V431H924.9" stroke="#cc5566" stroke-width="1"/></svg>
<svg style="position:absolute;left:932.5px;top:426.5px" width="5" height="3" viewBox="0 0 5 3"><path d="M0 0H5L2.5 3Z" fill="#555"/></svg>
<div style="left:948px;top:417px;width:154px;height:21px;border:1px solid #d2d2d2;border-top-color:#c4c4c4;border-radius:2px;background:#fff;box-sizing:border-box;"></div>
<div class="tx" style="transform:scaleX(0.9842);transform-origin:0 0;left:951.5px;top:420.69px;font-size:11px;line-height:14px;color:#c4c4c4;font-weight:400;">Поиск (Ctrl+F)</div>
<div style="left:1081px;top:418px;width:1px;height:19px;background:#d6d6d6;"></div>
<svg style="position:absolute;left:1087.5px;top:423.8px" width="8" height="8" viewBox="0 0 8 8"><path d="M0.5 0.5L7.5 7.5M7.5 0.5L0.5 7.5" stroke="#555" stroke-width="1"/></svg>
<div style="left:1108px;top:417px;width:34px;height:21px;border:1px solid #c4c4c4;border-radius:3px;background:linear-gradient(#ffffff,#f1f1f1);box-shadow:0 1px 1px rgba(0,0,0,0.18);box-sizing:border-box;"></div>
<svg style="position:absolute;left:1114px;top:420.5px" width="14" height="14" viewBox="0 0 14 14"><circle cx="5.5" cy="5.5" r="4" fill="none" stroke="#1d6fa5" stroke-width="2.2"/><path d="M8.5 8.5L12.5 12.5" stroke="#1d6fa5" stroke-width="2.8"/></svg>
<svg style="position:absolute;left:1132.5px;top:426.5px" width="5" height="3" viewBox="0 0 5 3"><path d="M0 0H5L2.5 3Z" fill="#555"/></svg>
<div style="left:1148px;top:417px;width:47px;height:21px;border:1px solid #c4c4c4;border-radius:3px;background:linear-gradient(#ffffff,#f1f1f1);box-shadow:0 1px 1px rgba(0,0,0,0.18);box-sizing:border-box;"></div>
<div class="tx" style="transform:scaleX(0.9271);transform-origin:0 0;left:1158.2px;top:420.52px;font-size:11.5px;line-height:14px;color:#4f4f4f;font-weight:400;">Еще</div>
<svg style="position:absolute;left:1185.2px;top:427.0px" width="5" height="3" viewBox="0 0 5 3"><path d="M0 0H5L2.5 3Z" fill="#555"/></svg>
<div style="left:1200px;top:417px;width:26px;height:21px;border:1px solid #c4c4c4;border-radius:3px;background:linear-gradient(#ffffff,#f1f1f1);box-shadow:0 1px 1px rgba(0,0,0,0.18);box-sizing:border-box;"></div>
<div class="tx" style="left:1209px;top:418.65px;font-size:14px;line-height:18px;color:#333;font-weight:400;">?</div>
<div style="left:686px;top:445px;width:540px;height:343px;border:1px solid #c2c2c2;box-sizing:border-box;background:#fff;"></div>
<div style="left:687px;top:446px;width:538px;height:19px;background:#f2f2f2;"></div>
<div style="left:687px;top:464px;width:538px;height:1px;background:#d8d8d8;"></div>
<div style="left:974px;top:446px;width:1px;height:19px;background:#dcdcdc;"></div>
<div style="left:1055px;top:446px;width:1px;height:19px;background:#dcdcdc;"></div>
<div style="left:1181px;top:446px;width:1px;height:19px;background:#dcdcdc;"></div>
<div class="tx" style="transform:scaleX(0.9908);transform-origin:0 0;left:691px;top:447.72px;font-size:11.5px;line-height:14px;color:#707070;font-weight:400;">Наименование</div>
<svg style="position:absolute;left:960px;top:450px" width="6" height="9" viewBox="0 0 6 9"><path d="M3 0V7M0.8 5L3 8L5.2 5" stroke="#666" stroke-width="1" fill="none"/></svg>
<div class="tx" style="transform:scaleX(0.9712);transform-origin:0 0;left:979.5px;top:447.72px;font-size:11.5px;line-height:14px;color:#707070;font-weight:400;">Код</div>
<div class="tx" style="transform:scaleX(0.9719);transform-origin:0 0;left:1059.8px;top:447.72px;font-size:11.5px;line-height:14px;color:#707070;font-weight:400;">Норма времени</div>
<div class="tx" style="transform:scaleX(1.0066);transform-origin:0 0;left:1185.8px;top:447.72px;font-size:11.5px;line-height:14px;color:#707070;font-weight:400;">Статус</div>
<div style="left:687px;top:466px;width:538px;height:16px;background:#FFF1C9;"></div>
<div style="left:687px;top:482px;width:538px;height:1px;background:#ebebeb;"></div>
<svg style="position:absolute;left:694.5px;top:470.0px" width="5" height="7" viewBox="0 0 5 7"><path d="M0.5 0.5L4.5 3.5L0.5 6.5Z" fill="#555"/></svg>
<svg style="position:absolute;left:707px;top:468.0px" width="15" height="12" viewBox="0 0 15 12"><path d="M0.6 2.2Q0.6 0.6 2 0.6H5.5L7 2H13Q14.4 2 14.4 3.4V10Q14.4 11.4 13 11.4H2Q0.6 11.4 0.6 10Z" fill="#FCD98A" stroke="#E0A84A" stroke-width="1"/><path d="M0.8 4.3H14.2" stroke="#E0A84A" stroke-width="0.9"/></svg>
<div style="left:724px;top:466px;width:249px;height:15px;border:2px solid #F3C500;box-sizing:border-box;background:#FDE9A2;"></div>
<div class="tx" style="transform:scaleX(1.0164);transform-origin:0 0;left:728.2px;top:467.12px;font-size:11.5px;line-height:14px;color:#3d3d3d;font-weight:400;">Газотурбинные установки</div>
<div class="tx" style="transform:scaleX(0.8704);transform-origin:0 0;left:979.5px;top:467.12px;font-size:11.5px;line-height:14px;color:#3d3d3d;font-weight:400;">100000003</div>
<div style="left:687px;top:500px;width:538px;height:1px;background:#ebebeb;"></div>
<svg style="position:absolute;left:694.5px;top:487.5px" width="5" height="7" viewBox="0 0 5 7"><path d="M0.5 0.5L4.5 3.5L0.5 6.5Z" fill="#555"/></svg>
<svg style="position:absolute;left:707px;top:485.5px" width="15" height="12" viewBox="0 0 15 12"><path d="M0.6 2.2Q0.6 0.6 2 0.6H5.5L7 2H13Q14.4 2 14.4 3.4V10Q14.4 11.4 13 11.4H2Q0.6 11.4 0.6 10Z" fill="#FCD98A" stroke="#E0A84A" stroke-width="1"/><path d="M0.8 4.3H14.2" stroke="#E0A84A" stroke-width="0.9"/></svg>
<div class="tx" style="transform:scaleX(0.9640);transform-origin:0 0;left:728.2px;top:484.62px;font-size:11.5px;line-height:14px;color:#3d3d3d;font-weight:400;">Кабельные линии</div>
<div class="tx" style="transform:scaleX(0.8704);transform-origin:0 0;left:979.5px;top:484.62px;font-size:11.5px;line-height:14px;color:#3d3d3d;font-weight:400;">100000004</div>
<div style="left:687px;top:501px;width:538px;height:16px;background:#f8f8f8;"></div>
<div style="left:687px;top:517px;width:538px;height:1px;background:#ebebeb;"></div>
<svg style="position:absolute;left:694.5px;top:505.0px" width="5" height="7" viewBox="0 0 5 7"><path d="M0.5 0.5L4.5 3.5L0.5 6.5Z" fill="#555"/></svg>
<svg style="position:absolute;left:707px;top:503.0px" width="15" height="12" viewBox="0 0 15 12"><path d="M0.6 2.2Q0.6 0.6 2 0.6H5.5L7 2H13Q14.4 2 14.4 3.4V10Q14.4 11.4 13 11.4H2Q0.6 11.4 0.6 10Z" fill="#FCD98A" stroke="#E0A84A" stroke-width="1"/><path d="M0.8 4.3H14.2" stroke="#E0A84A" stroke-width="0.9"/></svg>
<div class="tx" style="transform:scaleX(1.0057);transform-origin:0 0;left:728.2px;top:502.12px;font-size:11.5px;line-height:14px;color:#3d3d3d;font-weight:400;">Оборудование автотранспортное</div>
<div class="tx" style="transform:scaleX(0.8704);transform-origin:0 0;left:979.5px;top:502.12px;font-size:11.5px;line-height:14px;color:#3d3d3d;font-weight:400;">100000037</div>
<div style="left:687px;top:535px;width:538px;height:1px;background:#ebebeb;"></div>
<svg style="position:absolute;left:694.5px;top:522.5px" width="5" height="7" viewBox="0 0 5 7"><path d="M0.5 0.5L4.5 3.5L0.5 6.5Z" fill="#555"/></svg>
<svg style="position:absolute;left:707px;top:520.5px" width="15" height="12" viewBox="0 0 15 12"><path d="M0.6 2.2Q0.6 0.6 2 0.6H5.5L7 2H13Q14.4 2 14.4 3.4V10Q14.4 11.4 13 11.4H2Q0.6 11.4 0.6 10Z" fill="#FCD98A" stroke="#E0A84A" stroke-width="1"/><path d="M0.8 4.3H14.2" stroke="#E0A84A" stroke-width="0.9"/></svg>
<div class="tx" style="transform:scaleX(0.9620);transform-origin:0 0;left:728.2px;top:519.62px;font-size:11.5px;line-height:14px;color:#3d3d3d;font-weight:400;">Оборудование общепромышленное</div>
<div class="tx" style="transform:scaleX(0.8704);transform-origin:0 0;left:979.5px;top:519.62px;font-size:11.5px;line-height:14px;color:#3d3d3d;font-weight:400;">100000036</div>
<div style="left:687px;top:536px;width:538px;height:16px;background:#f8f8f8;"></div>
<div style="left:687px;top:552px;width:538px;height:1px;background:#ebebeb;"></div>
<svg style="position:absolute;left:694.5px;top:540.0px" width="5" height="7" viewBox="0 0 5 7"><path d="M0.5 0.5L4.5 3.5L0.5 6.5Z" fill="#555"/></svg>
<svg style="position:absolute;left:707px;top:538.0px" width="15" height="12" viewBox="0 0 15 12"><path d="M0.6 2.2Q0.6 0.6 2 0.6H5.5L7 2H13Q14.4 2 14.4 3.4V10Q14.4 11.4 13 11.4H2Q0.6 11.4 0.6 10Z" fill="#FCD98A" stroke="#E0A84A" stroke-width="1"/><path d="M0.8 4.3H14.2" stroke="#E0A84A" stroke-width="0.9"/></svg>
<div class="tx" style="transform:scaleX(0.9595);transform-origin:0 0;left:728.2px;top:537.12px;font-size:11.5px;line-height:14px;color:#3d3d3d;font-weight:400;">Промышленные здания и сооружения</div>
<div class="tx" style="transform:scaleX(0.8704);transform-origin:0 0;left:979.5px;top:537.12px;font-size:11.5px;line-height:14px;color:#3d3d3d;font-weight:400;">100000006</div>
<div style="left:687px;top:570px;width:538px;height:1px;background:#ebebeb;"></div>
<div style="left:709px;top:559px;width:11px;height:4px;background:#4f8fc0;border-radius:1px;"></div>
<div class="tx" style="transform:scaleX(0.9988);transform-origin:0 0;left:728.2px;top:554.62px;font-size:11.5px;line-height:14px;color:#3d3d3d;font-weight:400;">Диагностика оборудования</div>
<div class="tx" style="transform:scaleX(0.8704);transform-origin:0 0;left:979.5px;top:554.62px;font-size:11.5px;line-height:14px;color:#3d3d3d;font-weight:400;">100000035</div>
<div class="tx" style="transform:scaleX(0.8770);transform-origin:0 0;left:1059.8px;top:554.62px;font-size:11.5px;line-height:14px;color:#3d3d3d;font-weight:400;">0 ч. 35 мин. 0 с.</div>
<div class="tx" style="left:1185.8px;top:554.62px;font-size:11.5px;line-height:14px;color:#3d3d3d;font-weight:400;width:39.5px;overflow:hidden;">Действующая</div>
<div style="left:687px;top:571px;width:538px;height:16px;background:#f8f8f8;"></div>
<div style="left:687px;top:587px;width:538px;height:1px;background:#ebebeb;"></div>
<div style="left:709px;top:576px;width:11px;height:5px;background:#4f8fc0;border-radius:1px;"></div>
<div class="tx" style="transform:scaleX(0.9983);transform-origin:0 0;left:728.2px;top:572.12px;font-size:11.5px;line-height:14px;color:#3d3d3d;font-weight:400;">Освидетельствование оборудования</div>
<div class="tx" style="transform:scaleX(0.8704);transform-origin:0 0;left:979.5px;top:572.12px;font-size:11.5px;line-height:14px;color:#3d3d3d;font-weight:400;">100000038</div>
<div class="tx" style="transform:scaleX(0.8747);transform-origin:0 0;left:1059.8px;top:572.12px;font-size:11.5px;line-height:14px;color:#3d3d3d;font-weight:400;">6 ч. 0 мин. 0 с.</div>
<div class="tx" style="left:1185.8px;top:572.12px;font-size:11.5px;line-height:14px;color:#3d3d3d;font-weight:400;width:39.5px;overflow:hidden;">Действующая</div>
<div style="left:687px;top:605px;width:538px;height:1px;background:#ebebeb;"></div>
<div style="left:709px;top:594px;width:11px;height:4px;background:#4f8fc0;border-radius:1px;"></div>
<div class="tx" style="transform:scaleX(0.9679);transform-origin:0 0;left:728.2px;top:589.62px;font-size:11.5px;line-height:14px;color:#3d3d3d;font-weight:400;">Работы по внешнему основанию</div>
<div class="tx" style="transform:scaleX(0.8704);transform-origin:0 0;left:979.5px;top:589.62px;font-size:11.5px;line-height:14px;color:#3d3d3d;font-weight:400;">100000002</div>
<div class="tx" style="transform:scaleX(0.8747);transform-origin:0 0;left:1059.8px;top:589.62px;font-size:11.5px;line-height:14px;color:#3d3d3d;font-weight:400;">2 ч. 0 мин. 0 с.</div>
<div class="tx" style="left:1185.8px;top:589.62px;font-size:11.5px;line-height:14px;color:#3d3d3d;font-weight:400;width:39.5px;overflow:hidden;">Действующая</div>
<div style="left:687px;top:606px;width:538px;height:16px;background:#f8f8f8;"></div>
<div style="left:687px;top:622px;width:538px;height:1px;background:#ebebeb;"></div>
<div style="left:709px;top:611px;width:11px;height:5px;background:#4f8fc0;border-radius:1px;"></div>
<div class="tx" style="transform:scaleX(0.9944);transform-origin:0 0;left:728.2px;top:607.12px;font-size:11.5px;line-height:14px;color:#3d3d3d;font-weight:400;">Устранение дефекта</div>
<div class="tx" style="transform:scaleX(0.8704);transform-origin:0 0;left:979.5px;top:607.12px;font-size:11.5px;line-height:14px;color:#3d3d3d;font-weight:400;">100000001</div>
<div class="tx" style="transform:scaleX(0.8770);transform-origin:0 0;left:1059.8px;top:607.12px;font-size:11.5px;line-height:14px;color:#3d3d3d;font-weight:400;">2 ч. 30 мин. 0 с.</div>
<div class="tx" style="left:1185.8px;top:607.12px;font-size:11.5px;line-height:14px;color:#3d3d3d;font-weight:400;width:39.5px;overflow:hidden;">Действующая</div>
<div style="left:974px;top:465px;width:1px;height:17px;background:#fbe6b0;"></div>
<div style="left:1055px;top:465px;width:1px;height:17px;background:#fbe6b0;"></div>
<div style="left:1181px;top:465px;width:1px;height:17px;background:#fbe6b0;"></div>
<div style="left:1225px;top:446px;width:21px;height:341px;background:#fff;"></div>
<div style="left:1225px;top:446px;width:1px;height:342px;background:#c2c2c2;"></div>
<svg style="position:absolute;left:696px;top:773px" width="5" height="6" viewBox="0 0 5 6"><path d="M4.5 0.5L0.5 3L4.5 5.5Z" fill="#bbb"/></svg>
<div style="left:709px;top:772px;width:383px;height:8px;background:#dadada;border-radius:4px;"></div>
<div style="left:709px;top:772px;width:347px;height:8px;background:#9a9a9a;border-radius:4px;"></div>
<svg style="position:absolute;left:1100.5px;top:773px" width="5" height="6" viewBox="0 0 5 6"><path d="M0.5 0.5L4.5 3L0.5 5.5Z" fill="#444"/></svg>
<div style="left:1129px;top:766px;width:97px;height:22px;border:1px solid #cfcfcf;border-bottom-color:#c2c2c2;border-right-color:#c2c2c2;box-sizing:border-box;background:#fff;"></div>
<div style="left:1153px;top:767px;width:1px;height:21px;background:#d6d6d6;"></div>
<div style="left:1177px;top:767px;width:1px;height:21px;background:#d6d6d6;"></div>
<div style="left:1201px;top:767px;width:1px;height:21px;background:#d6d6d6;"></div>
<svg style="position:absolute;left:1130px;top:768px" width="96" height="18" viewBox="1130 768 96 18"><path d="M1137 774.6H1147" stroke="#ccc" stroke-width="1"/><path d="M1142 775.2L1147.2 780.6H1136.8Z" fill="#aaa"/><path d="M1166 775L1171.2 780.6H1160.8Z" fill="#aaa"/><path d="M1190 780.6L1195.2 775H1184.8Z" fill="#aaa"/><path d="M1213.5 780.6L1218.7 775H1208.3Z" fill="#aaa"/><path d="M1208.5 781H1218.5" stroke="#ccc" stroke-width="1"/></svg>
</body></html>
